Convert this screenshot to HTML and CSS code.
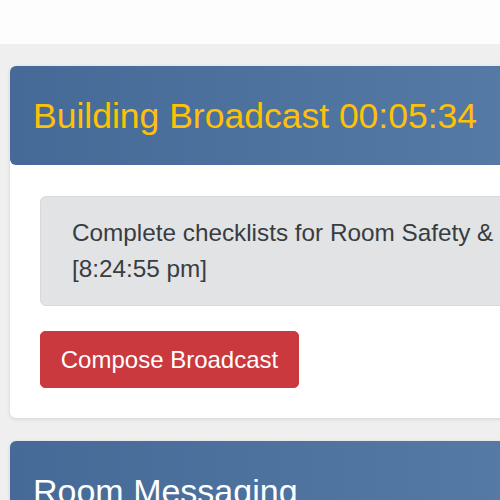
FILE: index.html
```html
<!DOCTYPE html>
<html>
<head>
<meta charset="utf-8">
<link rel="stylesheet" href="styles.css">
</head>
<body>
<div class="topbar"></div>
<main class="content">
  <section class="card">
    <div class="card-header">
      <h2 class="title title-warn">Building Broadcast 00:05:34</h2>
    </div>
    <div class="card-body">
      <div class="alert">Complete checklists for Room Safety &amp;<br>[8:24:55 pm]</div>
      <button class="btn-danger">Compose Broadcast</button>
    </div>
  </section>
  <section class="card">
    <div class="card-header">
      <h2 class="title title-sm">Room Messaging</h2>
    </div>
  </section>
</main>
</body>
</html>
```
FILE: styles.css
```css
html, body {
  margin: 0;
  padding: 0;
  background: #efefef;
  font-family: "Liberation Sans", Arial, sans-serif;
  overflow: hidden;
  width: 500px;
  height: 500px;
}
.topbar {
  height: 44px;
  background: #fdfdfe;
}
.content {
  padding: 22px 0 0 10px;
  display: flex;
  flex-direction: column;
  gap: 23px;
}
.card {
  width: 700px;
  background: #fff;
  border-radius: 6px;
  box-shadow: 0 1px 4px rgba(0,0,0,0.12);
}
.card-header {
  background: linear-gradient(90deg, #456a97 0%, #5b80ab 100%);
  border-radius: 6px;
  height: 99px;
  padding: 29px 23px 0;
  box-sizing: border-box;
}
.title {
  margin: 0;
  font-weight: 400;
  font-size: 35.5px;
  line-height: 1.2;
  color: #fff;
  white-space: nowrap;
}
.title-warn {
  color: #ffc107;
}
.title-sm {
  font-size: 34px;
  padding-top: 1px;
}
.card-body {
  padding: 31px 30px 30px;
}
.alert {
  background: #e2e3e5;
  border: 1px solid #d6d8db;
  border-radius: 6px;
  padding: 18px 31px;
  font-size: 24.3px;
  line-height: 36px;
  color: #383d41;
  white-space: nowrap;
}
.btn-danger {
  margin-top: 25px;
  display: block;
  background: #c9393d;
  color: #fff;
  border: 1px solid #c9393d;
  border-radius: 5px;
  font-family: inherit;
  font-size: 24px;
  height: 57px;
  width: 259px;
  padding: 0;
}
```
